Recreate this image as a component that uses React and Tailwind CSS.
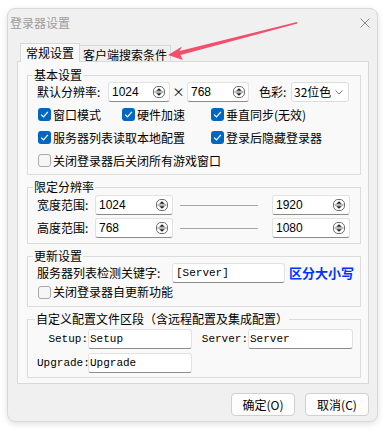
import React from "react";

const Spin = () => (
  <svg width="12" height="12" viewBox="0 0 12 12" className="shrink-0">
    <rect x="0.5" y="0.5" width="11" height="11" rx="4.5" fill="#fff" stroke="#6e6e6e" />
    <line x1="1.5" y1="6" x2="10.5" y2="6" stroke="#6e6e6e" />
    <path d="M3.2 4.8 L6 2.2 L8.8 4.8Z" fill="#1e1e1e" />
    <path d="M3.2 7.2 L8.8 7.2 L6 9.8Z" fill="#1e1e1e" />
  </svg>
);

const Check = ({ checked }) =>
  checked ? (
    <span className="ml-[1px] w-[13px] h-[13px] rounded-[3px] bg-[#0067c0] flex items-center justify-center shrink-0">
      <svg width="9" height="9" viewBox="0 0 9 9">
        <path d="M1.2 4.6 L3.5 6.9 L7.9 1.9" fill="none" stroke="#fff" strokeWidth="1.3" />
      </svg>
    </span>
  ) : (
    <span className="ml-[1px] w-[13px] h-[13px] rounded-[3px] bg-[#f6f6f6] border border-[#a9a9a9] shrink-0" />
  );

const CheckItem = ({ checked, children, className = "" }) => (
  <div className={"flex items-center " + className}>
    <Check checked={checked} />
    <span className="ml-[2px] whitespace-nowrap">{children}</span>
  </div>
);

const inputBase =
  "h-[20px] bg-white border border-[#e2e2e2] border-b-[#8a8a8a] rounded-[3px] flex items-center shrink-0";

export default function App() {
  return (
    <div className="relative w-[387px] h-[432px] bg-white overflow-hidden font-['Noto_Sans_CJK_SC','Noto_Sans',sans-serif] text-[12px] leading-[14px] text-black">
      <div className="ml-[7px] mt-[8px] w-[371px] h-[414px] bg-[#f0f0f0] rounded-[8px] border border-[#d9d9d9] shadow-[0_2px_6px_rgba(0,0,0,0.12)] flex flex-col">
        {/* title bar */}
        <div className="h-[27px] flex items-center justify-between pl-[2px] pr-[7px] shrink-0">
          <span className="text-[#9c9c9c] text-[12px]">登录器设置</span>
          <svg width="10" height="10" viewBox="0 0 10 10">
            <path d="M0.5 0.5 L9.5 9.5 M9.5 0.5 L0.5 9.5" stroke="#8c8c8c" strokeWidth="1" />
          </svg>
        </div>

        {/* tabs */}
        <div className="mt-[7px] ml-[9px] w-[352px]">
          <div className="flex items-end pl-[3px] h-[18px]">
            <div className="relative z-10 h-[19px] -mb-[1px] px-[5px] bg-[#f9f9f9] border border-b-0 border-[#d9d9d9] flex items-center">
              常规设置
            </div>
            <div className="-ml-[1px] h-[16px] px-[3px] bg-[#f0f0f0] border border-b-0 border-[#d9d9d9] flex items-center pt-[2px]">
              客户端搜索条件
            </div>
          </div>

          {/* panel */}
          <div className="bg-[#f9f9f9] border border-[#d9d9d9] pt-[6px] pl-[9px] pr-[7px] pb-[5px] flex flex-col">
            {/* group 1 */}
            <fieldset className="border border-[#dcdcdc] pl-[9px] pr-[6px] pb-[2px]">
              <legend className="-ml-[4px] px-[1px] leading-[14px]">基本设置</legend>
              <div className="flex items-center h-[20px]">
                <span className="w-[71px] shrink-0">默认分辨率:</span>
                <div className={inputBase + " w-[62px] pl-[3px] pr-[4px] justify-between"}>
                  <span className="font-['Liberation_Sans',sans-serif]">1024</span>
                  <Spin />
                </div>
                <span className="w-[17px] text-center shrink-0">×</span>
                <div className={inputBase + " w-[62px] pl-[3px] pr-[3px] justify-between"}>
                  <span className="font-['Liberation_Sans',sans-serif]">768</span>
                  <Spin />
                </div>
                <span className="ml-[10px] w-[32px] shrink-0">色彩:</span>
                <div className="h-[20px] w-[58px] bg-white border border-[#dcdcdc] rounded-[3px] flex items-center justify-between pl-[2px] pr-[5px]">
                  <span>32位色</span>
                  <svg width="8" height="5" viewBox="0 0 8 5">
                    <path d="M0.5 0.5 L4 4 L7.5 0.5" fill="none" stroke="#777" strokeWidth="1" />
                  </svg>
                </div>
              </div>
              <div className="mt-[1px] grid grid-cols-[84px_89px_1fr]">
                <CheckItem checked className="h-[23px]">窗口模式</CheckItem>
                <CheckItem checked className="h-[23px]">硬件加速</CheckItem>
                <CheckItem checked className="h-[23px]">垂直同步(无效)</CheckItem>
                <CheckItem checked className="h-[23px] col-span-2">服务器列表读取本地配置</CheckItem>
                <CheckItem checked className="h-[23px]">登录后隐藏登录器</CheckItem>
                <CheckItem className="h-[23px] col-span-3">关闭登录器后关闭所有游戏窗口</CheckItem>
              </div>
            </fieldset>

            {/* group 2 */}
            <fieldset className="mt-[5px] border border-[#dcdcdc] pl-[9px] pr-[6px] pb-[5px]">
              <legend className="-ml-[4px] px-[1px] leading-[14px]">限定分辨率</legend>
              <div className="mt-[1px] flex items-center h-[20px]">
                <span className="w-[58px] shrink-0">宽度范围:</span>
                <div className={inputBase + " w-[78px] pl-[3px] pr-[4px] justify-between"}>
                  <span className="font-['Liberation_Sans',sans-serif]">1024</span>
                  <Spin />
                </div>
                <div className="ml-[7px] w-[78px] h-px bg-[#a6a6a6]" />
                <div className={inputBase + " ml-[14px] w-[78px] pl-[3px] pr-[4px] justify-between"}>
                  <span className="font-['Liberation_Sans',sans-serif]">1920</span>
                  <Spin />
                </div>
              </div>
              <div className="mt-[3px] flex items-center h-[20px]">
                <span className="w-[58px] shrink-0">高度范围:</span>
                <div className={inputBase + " w-[78px] pl-[3px] pr-[4px] justify-between"}>
                  <span className="font-['Liberation_Sans',sans-serif]">768</span>
                  <Spin />
                </div>
                <div className="ml-[7px] w-[78px] h-px bg-[#a6a6a6]" />
                <div className={inputBase + " ml-[14px] w-[78px] pl-[3px] pr-[4px] justify-between"}>
                  <span className="font-['Liberation_Sans',sans-serif]">1080</span>
                  <Spin />
                </div>
              </div>
            </fieldset>

            {/* group 3 */}
            <fieldset className="mt-[5px] border border-[#dcdcdc] pl-[9px] pr-[6px] pb-[5px]">
              <legend className="-ml-[4px] px-[1px] leading-[14px]">更新设置</legend>
              <div className="flex items-center h-[20px]">
                <span className="w-[135px] shrink-0">服务器列表检测关键字:</span>
                <div className={inputBase + " w-[113px] pl-[3px]"}>
                  <span className="font-['Liberation_Mono',monospace] text-[11px]">[Server]</span>
                </div>
                <span className="ml-[4px] text-[13px] font-bold text-[#0033ff] whitespace-nowrap">区分大小写</span>
              </div>
              <CheckItem className="h-[18px]">关闭登录器自更新功能</CheckItem>
            </fieldset>

            {/* group 4 */}
            <fieldset className="mt-[5px] border border-[#dcdcdc] pl-[9px] pr-[6px] pb-[4px]">
              <legend className="-ml-[2px] px-[1px] leading-[14px]">自定义配置文件区段（含远程配置及集成配置）</legend>
              <div className="mt-[3px] flex items-center h-[20px] font-['Liberation_Mono',monospace] text-[11px]">
                <span className="w-[51px] text-right shrink-0">Setup:</span>
                <div className={inputBase + " w-[104px] pl-[1px]"}>Setup</div>
                <span className="w-[56px] text-right shrink-0">Server:</span>
                <div className={inputBase + " w-[105px] pl-[1px]"}>Server</div>
              </div>
              <div className="mt-[4px] flex items-center h-[20px] font-['Liberation_Mono',monospace] text-[11px]">
                <span className="w-[51px] text-right shrink-0">Upgrade:</span>
                <div className={inputBase + " w-[104px] pl-[1px]"}>Upgrade</div>
              </div>
            </fieldset>
          </div>
        </div>

        {/* buttons */}
        <div className="mt-[9px] flex justify-end gap-[10px] pr-[8px]">
          <button className="w-[64px] h-[23px] bg-[#fdfdfd] border border-[#d0d0d0] rounded-[4px] text-[12px] flex items-center justify-center">
            确定(O)
          </button>
          <button className="w-[64px] h-[23px] bg-[#fdfdfd] border border-[#d0d0d0] rounded-[4px] text-[12px] flex items-center justify-center">
            取消(C)
          </button>
        </div>
      </div>

      {/* red annotation arrow */}
      <svg className="absolute inset-0 pointer-events-none" width="387" height="432" viewBox="0 0 387 432">
        <polygon
          points="168,55 182,46.5 179.5,51 297,22 297.5,23.5 180.5,55 183,60"
          fill="#f24f6c"
        />
      </svg>
    </div>
  );
}
